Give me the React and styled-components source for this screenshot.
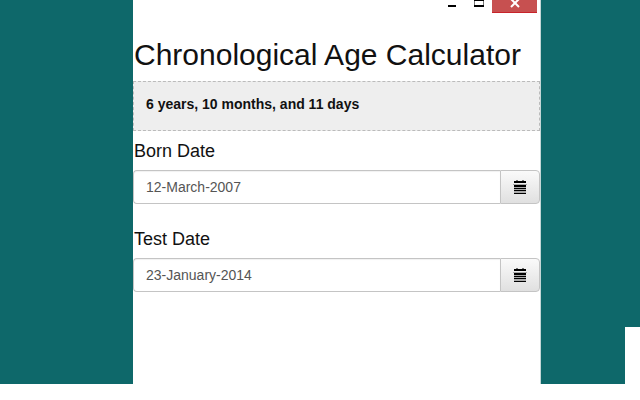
import React, { useState } from "react";
import styled, { createGlobalStyle } from "styled-components";

const GlobalStyle = createGlobalStyle`
  * {
    box-sizing: border-box;
  }

  body {
    margin: 0;
    background: #fff;
    color: #111;
    font-family: "Liberation Sans", Arial, sans-serif;
  }
`;

const Desktop = styled.div`
  display: grid;
  grid-template-columns: 133fr 408fr 99fr;
  min-height: calc(100vh - 16px);
  background: #0e686a;
`;

const Window = styled.main`
  grid-column: 2;
  background: #fff;
  border-right: 1px solid #c3d6d6;
`;

const Corner = styled.div`
  align-self: end;
  justify-self: end;
  width: 15px;
  height: 57px;
  background: #fff;
`;

const TitleBar = styled.div`
  display: flex;
  justify-content: flex-end;
  height: 13px;
  padding-right: 3px;
`;

const WindowButton = styled.button`
  display: flex;
  justify-content: center;
  width: ${(props) => (props.$close ? "45px" : "27px")};
  padding: 0;
  border: 0;
  border-bottom: ${(props) => (props.$close ? "1px solid #c8232a" : "0")};
  background: ${(props) => (props.$close ? "#c75050" : "transparent")};
`;

const Title = styled.h1`
  margin: 0;
  padding: 25px 0 9px 1px;
  font-size: 30px;
  line-height: 34px;
  font-weight: 400;
  white-space: nowrap;
`;

const Result = styled.output`
  display: block;
  padding: 12px 12px 16px;
  border: 1px dashed #bbb;
  background: #eee;
  font-size: 14px;
  line-height: 20px;
  font-weight: 700;
`;

const Field = styled.div`
  padding: 10px 0 15px;
`;

const Label = styled.label`
  display: block;
  padding: 0 1px 9px;
  font-size: 18px;
  line-height: 20px;
`;

const InputGroup = styled.div`
  display: flex;
  height: 34px;
`;

const DateInput = styled.input`
  flex: 1;
  min-width: 0;
  padding: 0 12px;
  border: 1px solid #c4c4c4;
  border-right: 0;
  border-radius: 4px 0 0 4px;
  background: #fff;
  box-shadow: inset 0 1px 1px rgba(0, 0, 0, 0.06);
  color: #555;
  font-family: inherit;
  font-size: 14px;
`;

const CalendarButton = styled.button`
  display: flex;
  justify-content: center;
  align-items: center;
  width: 40px;
  padding: 0;
  border: 1px solid #c4c4c4;
  border-radius: 0 4px 4px 0;
  background: linear-gradient(#fafafa, #e0e0e0);
`;

const MinimizeIcon = () => (
  <svg width="8" height="7" shapeRendering="crispEdges" aria-hidden="true">
    <path d="M0 5h8v2H0z" fill="#000" />
  </svg>
);

const MaximizeIcon = () => (
  <svg width="10" height="7" shapeRendering="crispEdges" aria-hidden="true">
    <path d="M0 0h10v1H0zM0 5h10v2H0z" fill="#000" />
    <path d="M0 1h1v4H0zM9 1h1v4H9z" fill="#777" />
  </svg>
);

const CloseIcon = () => (
  <svg width="10" height="8" aria-hidden="true">
    <path d="M1 -1L9 7M9 -1L1 7" stroke="#fff" strokeWidth="2" />
  </svg>
);

const CalendarIcon = () => (
  <svg width="14" height="14" shapeRendering="crispEdges" aria-hidden="true">
    <path d="M3 0h2v1H3zM9 0h2v1H9z" fill="#777" />
    <path
      d="M1 1h12v2H1zM1 5h12v2H1zM1 8h12v1H1zM1 10h12v1H1zM1 13h12v1H1z"
      fill="#000"
    />
    <path d="M0 4h14v1H0zM1 7h12v1H1zM1 9h12v1H1zM1 11h12v2H1z" fill="#aaa" />
  </svg>
);

const DateField = ({ id, label, initial }) => {
  const [value, setValue] = useState(initial);

  return (
    <Field>
      <Label htmlFor={id}>{label}</Label>
      <InputGroup>
        <DateInput
          id={id}
          type="text"
          value={value}
          onChange={(e) => setValue(e.target.value)}
        />
        <CalendarButton type="button" aria-label={`Choose ${label}`}>
          <CalendarIcon />
        </CalendarButton>
      </InputGroup>
    </Field>
  );
};

const App = () => {
  return (
    <>
      <GlobalStyle />
      <Desktop>
        <Window>
          <TitleBar>
            <WindowButton type="button" aria-label="Minimize">
              <MinimizeIcon />
            </WindowButton>
            <WindowButton type="button" aria-label="Maximize">
              <MaximizeIcon />
            </WindowButton>
            <WindowButton type="button" aria-label="Close" $close>
              <CloseIcon />
            </WindowButton>
          </TitleBar>
          <Title>Chronological Age Calculator</Title>
          <Result htmlFor="born test">6 years, 10 months, and 11 days</Result>
          <DateField id="born" label="Born Date" initial="12-March-2007" />
          <DateField id="test" label="Test Date" initial="23-January-2014" />
        </Window>
        <Corner />
      </Desktop>
    </>
  );
};

export default App;
